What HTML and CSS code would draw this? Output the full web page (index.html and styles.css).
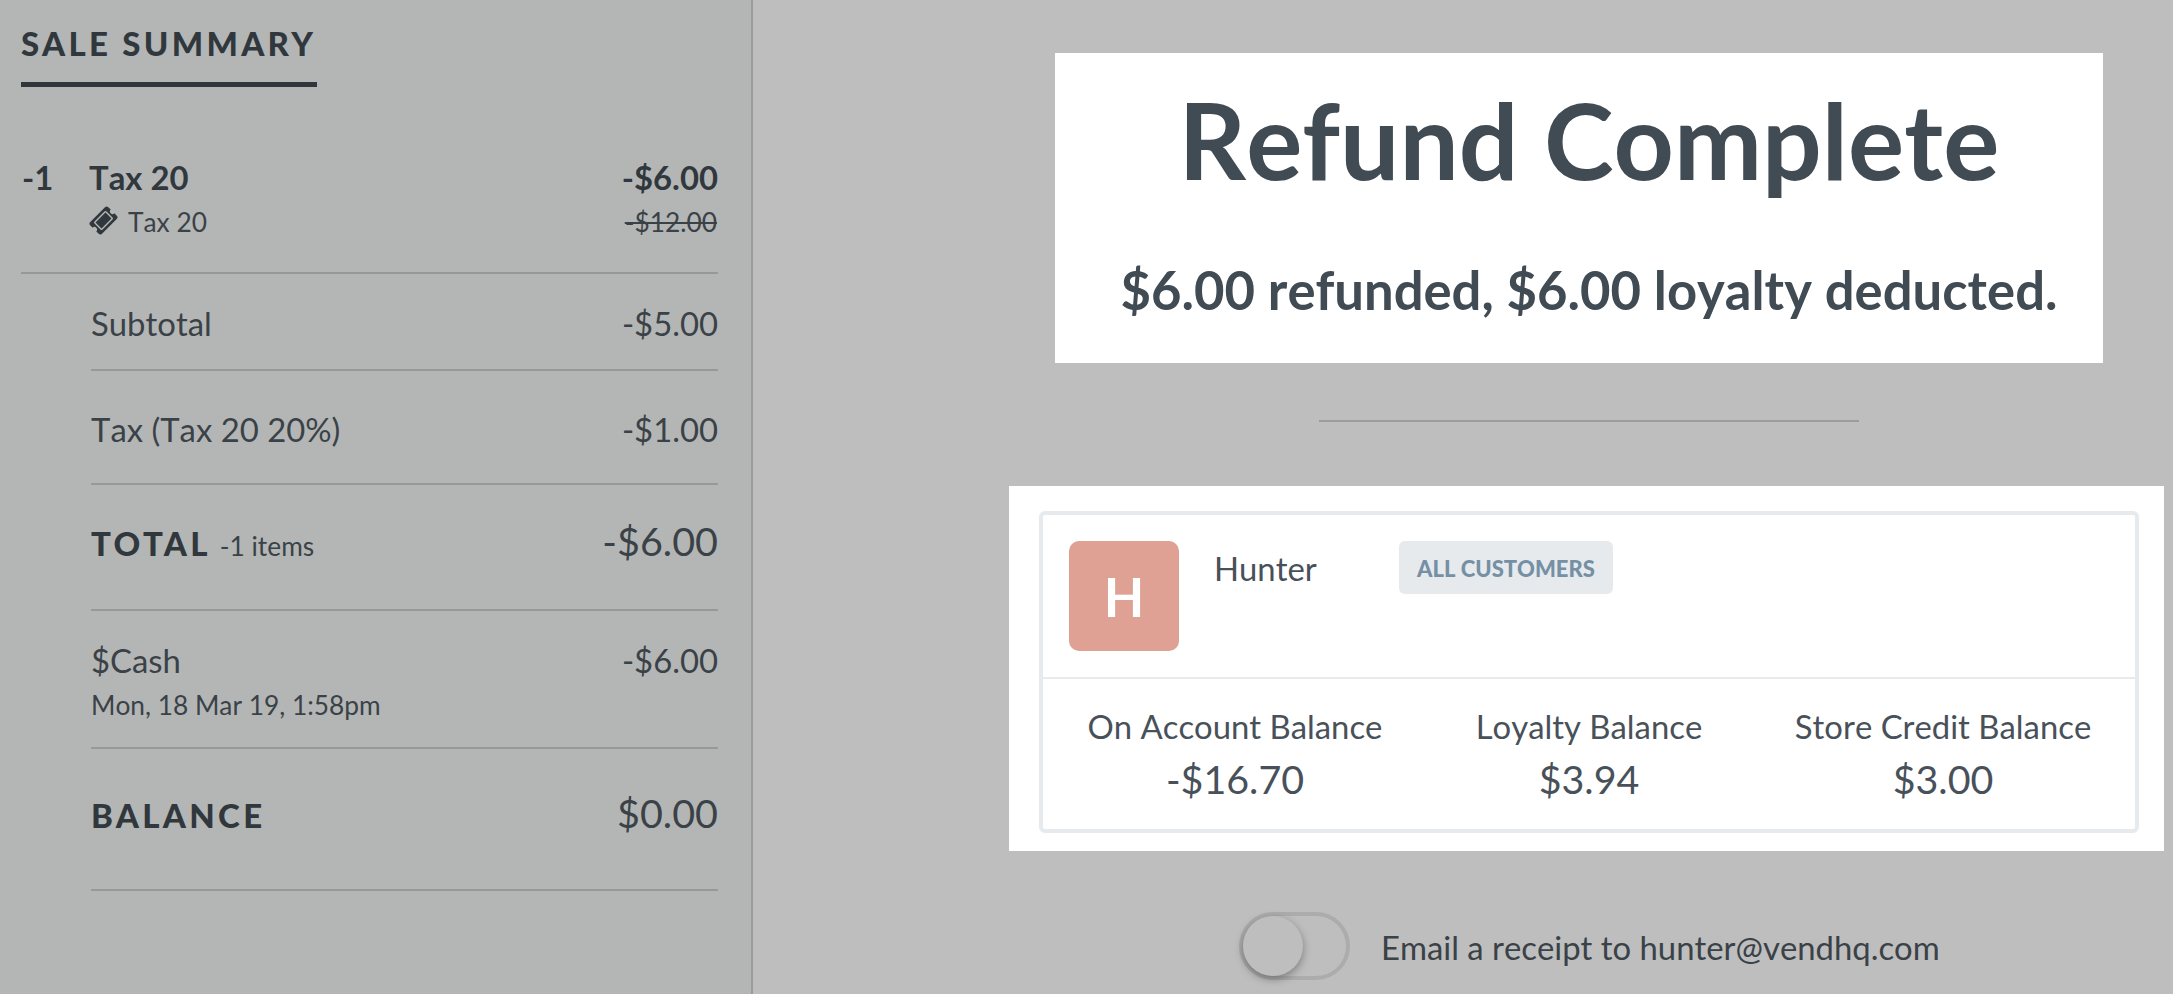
FILE: index.html
```html
<!DOCTYPE html>
<html lang="en">
<head>
<meta charset="utf-8">
<title>Refund Complete</title>
<link rel="stylesheet" href="styles.css">
</head>
<body>
<div class="app">
  <aside class="sidebar">
    <h2 class="heading">SALE SUMMARY</h2>
    <div class="item">
      <span class="qty">-1</span>
      <div class="item-info">
        <div class="item-name">Tax 20</div>
        <div class="item-note">
          <svg class="ticket" viewBox="0 0 30 30">
            <g transform="translate(14.5 14.5) rotate(-45)">
              <path fill="#30383e" d="M-10.4-8.3H10.4Q12.8-8.3 12.8-6V-2.6A2.6 2.6 0 0 0 12.8 2.6V6Q12.8 8.3 10.4 8.3H-10.4Q-12.8 8.3-12.8 6V2.6A2.6 2.6 0 0 0-12.8-2.6V-6Q-12.8-8.3-10.4-8.3Z"/>
              <rect x="-7.8" y="-5" width="15.6" height="10" rx=".8" fill="none" stroke="#b4b6b5" stroke-width="1.4"/>
            </g>
          </svg>
          <span>Tax 20</span>
        </div>
      </div>
      <div class="item-price">
        <div class="item-name">-$6.00</div>
        <div class="was">-$12.00</div>
      </div>
    </div>
    <div class="rows">
      <div class="row subtotal"><span>Subtotal</span><span>-$5.00</span></div>
      <div class="row tax"><span>Tax (Tax 20 20%)</span><span>-$1.00</span></div>
      <div class="row total"><span><b class="caps">TOTAL</b><span class="count">-1 items</span></span><span>-$6.00</span></div>
      <div class="row cash"><div>$Cash<div class="date">Mon, 18 Mar 19, 1:58pm</div></div><span>-$6.00</span></div>
      <div class="row balance"><b class="caps">BALANCE</b><span>$0.00</span></div>
    </div>
  </aside>
  <main class="main">
    <section class="result">
      <h1 class="title">Refund Complete</h1>
      <p class="message">$6.00 refunded, $6.00 loyalty deducted.</p>
    </section>
    <div class="divider"></div>
    <section class="customer-wrap">
      <div class="card">
        <div class="customer">
          <div class="avatar">H</div>
          <div class="name">Hunter</div>
          <div class="badge">ALL CUSTOMERS</div>
        </div>
        <div class="balances">
          <div><div class="label">On Account Balance</div><div class="value">-$16.70</div></div>
          <div><div class="label">Loyalty Balance</div><div class="value">$3.94</div></div>
          <div><div class="label">Store Credit Balance</div><div class="value">$3.00</div></div>
        </div>
      </div>
    </section>
    <div class="receipt">
      <div class="toggle"><div class="knob"></div></div>
      <span>Email a receipt to hunter@vendhq.com</span>
    </div>
  </main>
</div>
</body>
</html>
```
FILE: styles.css
```css
* { box-sizing: border-box; }

body {
  margin: 0;
  background: #bebebe;
  font-family: Lato, "Open Sans", sans-serif;
  font-size: 32.85px;
  font-kerning: none;
  line-height: 42px;
  color: #3a4248;
}

.app {
  display: flex;
  width: 2173px;
  height: 994px;
  overflow: hidden;
}

.sidebar {
  flex: none;
  width: 753px;
  padding: 23px 33px 0 21px;
  background: #b4b6b5;
  border-right: 2px solid #989c9e;
}

.heading {
  width: 296px;
  height: 64px;
  margin: 0 0 70px;
  border-bottom: 5px solid #2f373d;
  font-size: 33px;
  font-weight: 900;
  font-kerning: normal;
  line-height: 40px;
  letter-spacing: 3.3px;
  white-space: nowrap;
  color: #30383e;
}

.item {
  display: flex;
  height: 117px;
  border-bottom: 2px solid #96999c;
}

.qty, .item-name { font-weight: 700; color: #30383e; }
.qty { width: 68px; padding-left: 1px; }
.item-info { flex: 1; }
.item-price { text-align: right; }

.item-note, .was {
  margin-top: 7px;
  font-size: 26.3px;
  line-height: 32px;
}

.item-note { display: flex; gap: 9px; }
.ticket { width: 30px; height: 30px; }
.was { padding-right: 1px; text-decoration: line-through; }

.rows { margin-left: 70px; }

.row {
  display: flex;
  justify-content: space-between;
  border-bottom: 2px solid #96999c;
}

.subtotal { padding: 29px 0 24px; }
.tax { padding: 38px 0 32px; }
.total { padding: 32px 0 44px; line-height: 48px; }
.cash { padding: 29px 0 26px; }
.balance { padding: 40px 0 52px; line-height: 48px; }
.total > span:last-child, .balance > span { font-size: 39.5px; }
.total, .balance { align-items: baseline; height: 126px; }
.balance { height: 142px; }
.caps { font-size: 33px; font-weight: 900; font-kerning: normal; letter-spacing: 3.3px; color: #30383e; }
.count { margin-left: 9px; font-size: 26.3px; }
.date { margin-top: 7px; font-size: 26.3px; line-height: 32px; }

.main {
  flex: none;
  display: flex;
  flex-direction: column;
  align-items: center;
  width: 1672px;
  padding-top: 53px;
}

.result {
  width: 1048px;
  height: 310px;
  margin-right: 20px;
  padding: 11px 0 0 20px;
  background: #fff;
  text-align: center;
  white-space: nowrap;
  color: #414b53;
}

.title {
  margin: 0;
  font-size: 105.2px;
  line-height: 150px;
  font-weight: 700;
}

.message {
  margin: 45px 0 0;
  font-size: 52.6px;
  line-height: 62px;
  font-weight: 700;
}

.divider {
  width: 540px;
  height: 2px;
  margin: 57px 0 64px;
  background: #9b9d9d;
}

.customer-wrap {
  width: 1155px;
  height: 365px;
  margin-right: 5px;
  padding: 25px 25px 0 30px;
  background: #fff;
  color: #485159;
}

.card {
  height: 322px;
  border: 4px solid #e6eaed;
  border-radius: 6px;
}

.customer {
  display: flex;
  height: 164px;
  padding: 26px;
  border-bottom: 2px solid #e8ebed;
}

.avatar {
  width: 110px;
  height: 110px;
  border-radius: 10px;
  background: #dea193;
  color: #fff;
  font-size: 52.6px;
  font-weight: 700;
  line-height: 111px;
  text-align: center;
}

.name { width: 185px; margin: 7px 0 0 35px; }

.badge {
  width: 214px;
  height: 53px;
  border-radius: 6px;
  background: #e6eaed;
  color: #7590a4;
  font-size: 22px;
  font-weight: 900;
  line-height: 55px;
  text-align: center;
  white-space: nowrap;
}

.balances {
  display: grid;
  grid-template-columns: repeat(3, 1fr);
  padding: 27px 15px 0;
  text-align: center;
}

.value { margin-top: 6px; font-size: 39.4px; line-height: 49px; }

.receipt {
  display: flex;
  align-items: flex-start;
  gap: 31px;
  width: 700px;
  margin-top: 61px;
  line-height: 72px;
  white-space: nowrap;
}

.toggle {
  flex: none;
  width: 111px;
  height: 68px;
  border: 4px solid #acacac;
  border-radius: 34px;
}

.knob {
  width: 60px;
  height: 60px;
  border-radius: 50%;
  background: #bebebe;
  box-shadow: 0 3px 8px rgba(0, 0, 0, .35);
}
```
